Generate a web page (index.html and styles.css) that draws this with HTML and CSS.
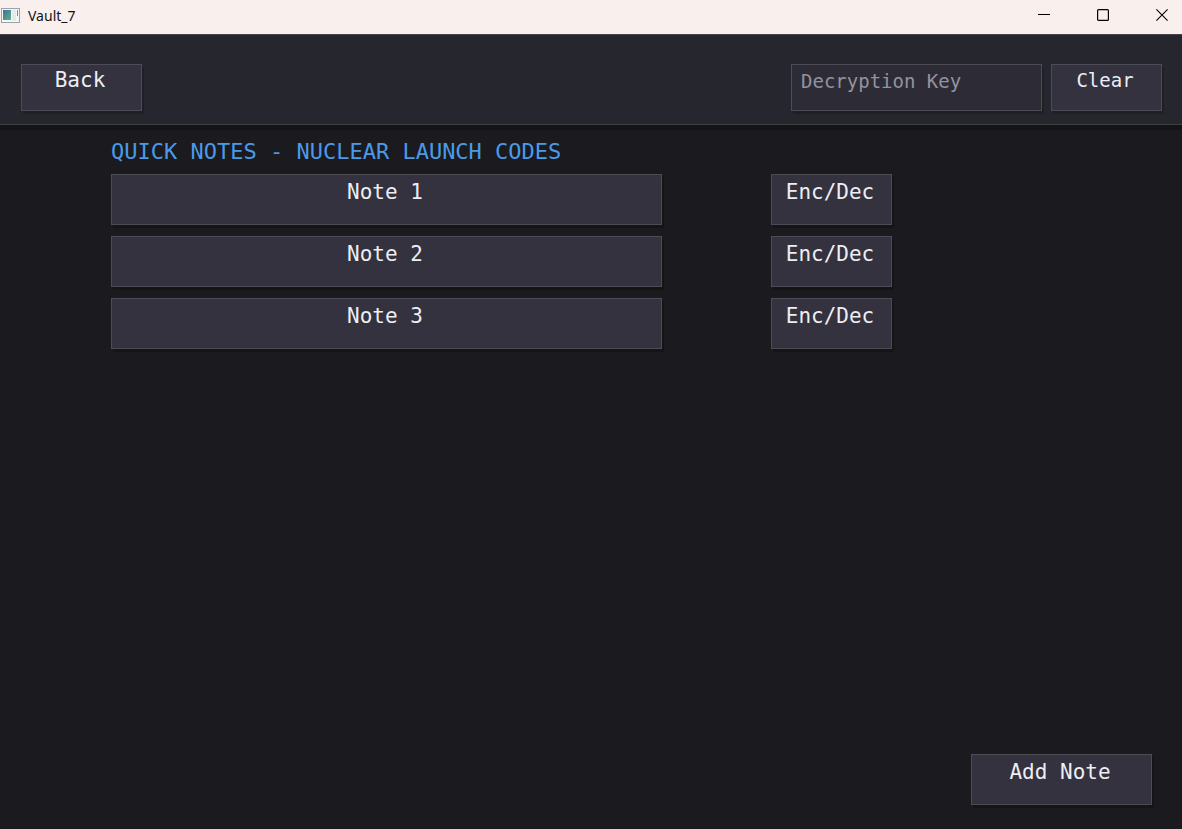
FILE: index.html
```html
<!DOCTYPE html>
<html lang="en">
<head>
<meta charset="utf-8">
<title>Vault_7</title>
<link rel="stylesheet" href="styles.css">
</head>
<body>
<div class="titlebar">
  <svg class="app-icon" width="20" height="16" viewBox="0 0 20 16" aria-hidden="true">
    <defs><linearGradient id="pane" x1="0" y1="0" x2="1" y2="1"><stop offset="0" stop-color="#3d6f9e"/><stop offset="1" stop-color="#5fb283"/></linearGradient></defs>
    <rect x="1.5" y=".5" width="18" height="14" fill="#f5f7f7" stroke="#9da2a8"/>
    <rect x="3" y="2" width="8" height="10" fill="url(#pane)"/>
    <rect x="12" y="2" width="4" height="11" fill="#e2ebe8"/>
    <rect x="17" y="2" width="1" height="6" fill="#5d9aa0"/>
  </svg>
  <span class="app-name">Vault_7</span>
  <div class="window-controls">
    <button type="button" class="window-button" aria-label="Minimize"><svg width="12" height="12" viewBox="0 0 12 12"><path d="M0 5.5H12" stroke="#000"/></svg></button>
    <button type="button" class="window-button" aria-label="Maximize"><svg width="12" height="12" viewBox="0 0 12 12"><rect x=".6" y=".6" width="10.8" height="10.8" rx="1" fill="none" stroke="#000" stroke-width="1.2"/></svg></button>
    <button type="button" class="window-button" aria-label="Close"><svg width="12" height="12" viewBox="0 0 12 12"><path d="M.4.4 11.6 11.6M11.6.4.4 11.6" stroke="#000" stroke-width="1.1"/></svg></button>
  </div>
</div>
<header class="toolbar">
  <button type="button" class="button back">Back</button>
  <input type="text" class="key-field" placeholder="Decryption Key" aria-label="Decryption Key">
  <button type="button" class="button clear">Clear</button>
</header>
<main class="content">
  <h1 class="heading">QUICK NOTES - NUCLEAR LAUNCH CODES</h1>
  <ul class="notes">
    <li class="note"><button type="button" class="button note-open">Note 1</button><button type="button" class="button note-crypt">Enc/Dec</button></li>
    <li class="note"><button type="button" class="button note-open">Note 2</button><button type="button" class="button note-crypt">Enc/Dec</button></li>
    <li class="note"><button type="button" class="button note-open">Note 3</button><button type="button" class="button note-crypt">Enc/Dec</button></li>
  </ul>
</main>
<footer class="footer">
  <button type="button" class="button add">Add Note</button>
</footer>
</body>
</html>
```
FILE: styles.css
```css
* { box-sizing: border-box; }

body {
  margin: 0;
  min-height: 100vh;
  display: flex;
  flex-direction: column;
  background: #1b1a1f;
  color: #ededf4;
  font-family: "DejaVu Sans Mono", "Liberation Mono", monospace;
  font-size: 21px;
}

.titlebar {
  display: flex;
  align-items: center;
  height: 35px;
  padding-bottom: 3px;
  border-bottom: 1px solid #414546;
  background: #f9f0ee;
  color: #111;
  font-family: "Noto Sans", "Open Sans", sans-serif;
  font-size: 14px;
}

.app-name { margin-left: 8px; }

.window-controls {
  display: flex;
  margin-left: auto;
  gap: 19px;
}

.window-button {
  display: flex;
  align-items: center;
  justify-content: center;
  width: 40px;
  height: 28px;
  padding: 0 0 2px;
  border: 0;
  background: none;
}

.toolbar {
  display: flex;
  padding: 29px 20px 13px 21px;
  border-bottom: 1px solid #3f3f43;
  background: #26262f;
  box-shadow: 0 5px 0 #151519;
}

.button,
.key-field {
  display: flex;
  align-items: flex-start;
  justify-content: center;
  height: 51px;
  margin: 0;
  border: 1px solid #4c4b56;
  border-radius: 0;
  background: #33323e;
  box-shadow: 2px 3px 0 #151518;
  color: inherit;
  font-family: inherit;
  font-size: 21px;
  line-height: 24px;
  padding: 5px 3px 5px 0;
}

.toolbar .button,
.key-field {
  height: 47px;
  padding-top: 3px;
  box-shadow: 2px 3px 0 #1f1f25;
}

.back { width: 121px; }

.key-field {
  width: 251px;
  margin: 0 9px 0 auto;
  padding: 0 9px 14px;
  background: #2d2c36;
  font-size: 19px;
}

.key-field::placeholder {
  color: #93929f;
  opacity: 1;
}

.toolbar .clear {
  width: 111px;
  font-size: 19px;
}

.content {
  flex: 1;
  padding: 15px 111px;
}

.heading {
  margin: 0 0 10px;
  color: #4a9ae8;
  font-size: 22px;
  font-weight: 400;
  line-height: 24px;
}

.notes {
  display: flex;
  flex-direction: column;
  gap: 11px;
  max-width: 781px;
  margin: 0;
  padding: 0;
  list-style: none;
}

.note {
  display: flex;
  gap: 109px;
}

.note-open { flex: 1; }

.note-crypt { width: 121px; }

.footer {
  display: flex;
  justify-content: flex-end;
  padding: 0 30px 24px;
}

.add { width: 181px; }
```
